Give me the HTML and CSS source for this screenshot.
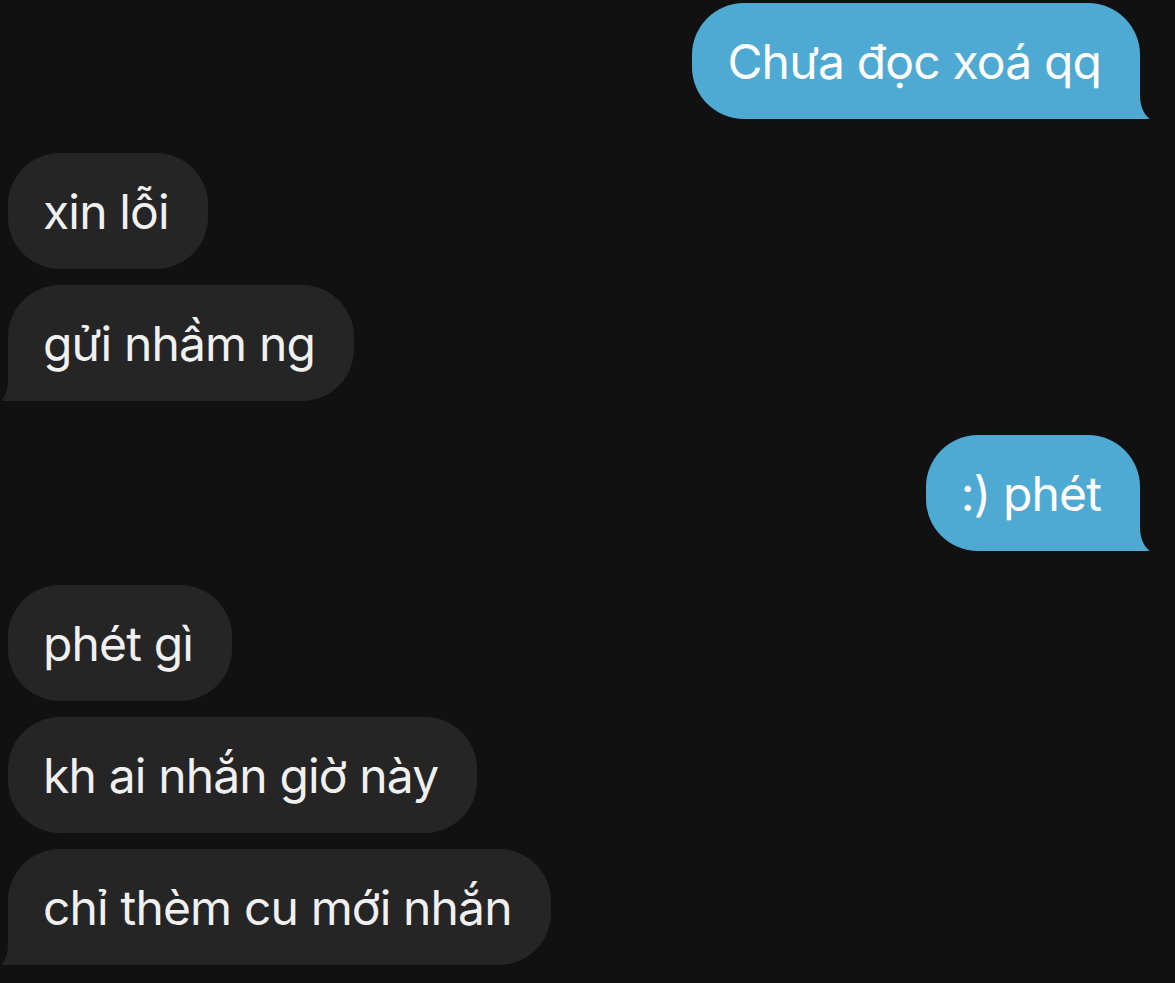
FILE: index.html
```html
<!DOCTYPE html>
<html lang="vi">
<head>
<meta charset="utf-8">
<title>Chat</title>
<link rel="stylesheet" href="styles.css">
</head>
<body>
<main class="thread">
  <div class="group group-sent">
    <div class="bubble sent tail">Chưa đọc xoá qq</div>
  </div>
  <div class="group group-received">
    <div class="bubble received">xin lỗi</div>
    <div class="bubble received tail">gửi nhầm ng</div>
  </div>
  <div class="group group-sent">
    <div class="bubble sent tail">:) phét</div>
  </div>
  <div class="group group-received">
    <div class="bubble received">phét gì</div>
    <div class="bubble received">kh ai nhắn giờ này</div>
    <div class="bubble received tail">chỉ thèm cu mới nhắn</div>
  </div>
</main>
</body>
</html>
```

FILE: styles.css
```css
html, body {
  margin: 0;
  padding: 0;
  background: #111111;
}

body {
  font-family: Inter, "Noto Sans", "Liberation Sans", sans-serif;
  -webkit-font-smoothing: antialiased;
}

.thread {
  display: flex;
  flex-direction: column;
  gap: 34px;
  padding: 3px 35px 20px 8px;
}

.group {
  display: flex;
  flex-direction: column;
  gap: 16px;
}

.group-sent {
  align-items: flex-end;
}

.group-received {
  align-items: flex-start;
}

.bubble {
  position: relative;
  font-size: 48px;
  line-height: 58px;
  padding: 30px 39px 28px 35px;
  border-radius: 52px;
  white-space: nowrap;
  letter-spacing: -0.85px;
}

.sent {
  background: #4faad3;
  color: #ffffff;
}

.received {
  background: #252525;
  color: #f0f0f0;
}

/* tails */
.sent.tail {
  border-bottom-right-radius: 18px;
}

.received.tail {
  border-bottom-left-radius: 18px;
}

.tail::before,
.tail::after {
  content: "";
  position: absolute;
  bottom: 0;
  height: 26px;
}

.sent.tail::before {
  right: -13px;
  width: 40px;
  background: #4faad3;
  border-bottom-right-radius: 6px 5px;
}

.sent.tail::after {
  right: -40px;
  width: 40px;
  background: #111111;
  border-bottom-left-radius: 13px 24px;
}

.received.tail::before {
  left: -9px;
  width: 40px;
  background: #252525;
  border-bottom-left-radius: 5px 5px;
}

.received.tail::after {
  left: -40px;
  width: 40px;
  background: #111111;
  border-bottom-right-radius: 9px 22px;
}
```
